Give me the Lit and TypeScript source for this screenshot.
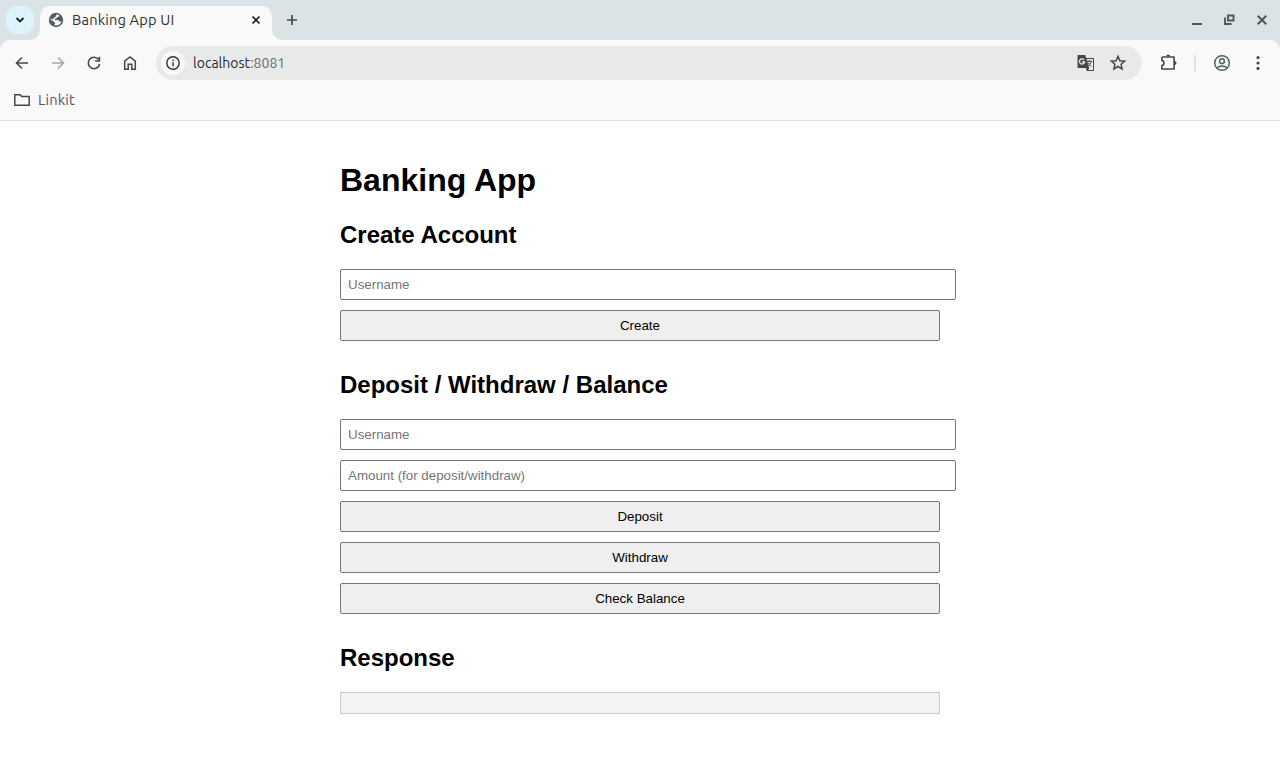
import { LitElement, html, css, svg } from "lit";
import { customElement } from "lit/decorators.js";

const icon = (size: number, body: unknown, box = "0 0 24 24") =>
  html`<svg width=${size} height=${size} viewBox=${box} fill="currentColor">${body}</svg>`;

const stroke = (d: string, w = 1.8) =>
  svg`<path d=${d} fill="none" stroke="currentColor" stroke-width=${w}/>`;

@customElement("browser-chrome")
class BrowserChrome extends LitElement {
  static styles = css`
    :host { display: block; height: 121px; box-sizing: border-box; background: #dae3e5;
      font-family: Ubuntu, "Noto Sans", sans-serif; color: #474747; }
    svg { display: block; flex: none; }
    .tabs { display: flex; height: 40px; box-sizing: border-box; padding: 6px 6px 0; }
    .search { width: 28px; height: 28px; border-radius: 10px; background: #def3f9; color: #1f1f1f;
      display: grid; place-items: center; margin-right: 6px; }
    .tab { position: relative; display: flex; align-items: center; width: 232px; height: 34px; box-sizing: border-box;
      padding: 0 8px 6px; background: #f9f9f9; border-radius: 10px 10px 0 0; }
    .tab::before, .tab::after { content: ""; position: absolute; bottom: 0; width: 10px; height: 10px; }
    .tab::before { left: -10px; background: radial-gradient(circle at 0 0, transparent 9.5px, #f9f9f9 10px); }
    .tab::after { right: -10px; background: radial-gradient(circle at 100% 0, transparent 9.5px, #f9f9f9 10px); }
    .title { flex: 1; margin-left: 8px; font-size: 14.67px; line-height: 20px; color: #303133; letter-spacing: 0.16px; white-space: nowrap; }
    .close { color: #1f1f1f; }
    .plus { margin: 6px 0 0 12px; }
    .window { margin-left: auto; display: flex; gap: 16px; padding: 6px 4px 0 0; color: #50575a; }
    .body { background: #f9f9f9; height: 81px; box-sizing: border-box; border-bottom: 1px solid #dfe1e1;
      border-radius: 10px 10px 0 0; }
    .toolbar { display: flex; align-items: center; height: 46px; padding: 0 13px; }
    .nav { display: flex; gap: 18px; margin-right: 17px; }
    .off { color: #a5a5a5; }
    .address { display: flex; align-items: center; width: 986px; height: 34px; box-sizing: border-box;
      padding: 0 15px 0 5px; border-radius: 17px; background: #e8eaea; }
    .info { width: 24px; height: 24px; border-radius: 50%; background: #f9f9f9; color: #303030; display: grid; place-items: center; }
    .url { flex: 1; margin-left: 8px; font-size: 14px; color: #292b2b; letter-spacing: 0.02px; }
    .port { color: #686b6b; }
    .address > svg + svg { margin-left: 14px; }
    .tools { display: flex; align-items: center; margin-left: 16px; }
    .rule { width: 2px; height: 16px; background: #d3e6e8; margin: 0 18px 0 16px; }
    .person { color: #4d6267; margin-left: -1px; }
    .dots { margin-left: 17px; }
    .bookmarks { display: flex; align-items: center; height: 28px; padding-left: 13px; }
    .bookmark { margin: 0 0 2px 7px; font-size: 14.67px; line-height: 17px; letter-spacing: 0.12px; color: #555759; }
  `;

  render() {
    return html`
      <div class="tabs">
        <div class="search">${icon(12, stroke("M2.5 4 6 7.5 9.5 4", 1.9), "0 0 12 12")}</div>
        <div class="tab">
          ${icon(16, svg`<circle cx="8" cy="8" r="7.2" fill="#555b60"/><path fill="#f9f9f9" d="M8.6 2.3 11.3 3.2C11.2 4.9 10 5 9 5.1L8.6 6.3 7 6.8V8h3.2l1 1.4 2.3-.2c-.6 2.2-2.2 3.9-4.9 4.4L5.8 13.2l1.3-.9V11L5.3 9.2 2.4 7.4C2.5 8 2.3 7 2.6 6.4L5 7.6 6.2 5.6 8.1 4.4Z"/>`, "0 0 16 16")}
          <span class="title">Banking App UI</span>
          <span class="close">${icon(16, stroke("M4.5 4.5 11.5 11.5M11.5 4.5 4.5 11.5", 1.7), "0 0 16 16")}</span>
        </div>
        <div class="plus">${icon(16, stroke("M8 3V13M3 8H13", 1.7), "0 0 16 16")}</div>
        <div class="window">
          ${icon(16, stroke("M2 12H12", 2), "0 0 16 16")}
          ${icon(16, svg`<path d="M6 3.5h5.5v5H6zM3 5.5V12h6.5" fill="none" stroke="currentColor" stroke-width="1.9"/>`, "0 0 16 16")}
          ${icon(16, stroke("M3.7 3.7 12.3 12.3M12.3 3.7 3.7 12.3", 2), "0 0 16 16")}
        </div>
      </div>
      <div class="body">
        <div class="toolbar">
          <div class="nav">
            ${icon(18, stroke("M15 9H3.8M9 3.5 3.5 9 9 14.5", 1.6), "0 0 18 18")}
            <span class="off">${icon(18, stroke("M3 9H14.2M9 3.5 14.5 9 9 14.5", 1.6), "0 0 18 18")}</span>
            ${icon(18, svg`${stroke("M13.6 5.6A5.7 5.7 0 1 0 14.6 10M14.4 2.8V7H10", 1.6)}`, "0 0 18 18")}
            ${icon(18, stroke("M3.7 7.2 9 3 14.3 7.2V15.2H10.8V10.2H7.2V15.2H3.7Z", 1.5), "0 0 18 18")}
          </div>
          <div class="address">
            <div class="info">${icon(16, svg`<circle cx="8" cy="8" r="6.2" fill="none" stroke="currentColor" stroke-width="1.4"/><path d="M7.3 7.2h1.4v4H7.3zM7.3 4.6h1.4V6H7.3z"/>`, "0 0 16 16")}</div>
            <span class="url">localhost<span class="port">:8081</span></span>
            ${icon(18, svg`<path d="M1.5 1h6.7l1 3H16c.6 0 1 .4 1 1v11c0 .6-.4 1-1 1H9.8l-1-3H1.5c-.6 0-1-.4-1-1V2c0-.6.4-1 1-1Z"/><path fill="#e8eaea" d="M9.6 5.1H16V16h-4.8l1-2-2.6-8.9Z"/><path fill="none" stroke="#e8eaea" stroke-width="1.3" d="M7 5.7A2.6 2.6 0 1 0 7.6 8H5.1"/><path fill="none" stroke="currentColor" stroke-width="1" d="M9.7 7.3h5.6M12.3 6v1.3M14.3 7.3c-.4 2-1.8 3.6-3.3 4.7M11 8.5c.8 1.5 2 2.7 3.3 3.8"/>`, "0 0 18 18")}
            ${icon(18, stroke("M9 2.4 10.9 6.8 15.7 7.2 12.1 10.3 13.1 15 9 12.5 4.9 15 5.9 10.3 2.3 7.2 7.1 6.8Z", 1.5), "0 0 18 18")}
          </div>
          <div class="tools">
            ${icon(20, svg`<path d="M4.7 4H16.1V16H3.8V12.6C6.6 12.4 6.6 7.6 3.8 7.4V4.9Q3.8 4 4.7 4Z" fill="none" stroke="currentColor" stroke-width="1.6" stroke-linejoin="round"/><path d="M8.2 3.6a2 2 0 0 1 4 0ZM16.5 8a2 2 0 0 1 0 4Z"/>`, "0 0 20 20")}
            <div class="rule"></div>
            <span class="person">${icon(18, svg`<g fill="none" stroke="currentColor" stroke-width="1.5"><circle cx="9" cy="9" r="7.3"/><circle cx="9" cy="7.2" r="2.4"/><path d="M3.8 14C6.8 11.4 11.2 11.4 14.2 14"/></g>`, "0 0 18 18")}</span>
            <span class="dots">${icon(18, svg`<circle cx="10" cy="3.6" r="1.6"/><circle cx="10" cy="9" r="1.6"/><circle cx="10" cy="14.4" r="1.6"/>`, "0 0 18 18")}</span>
          </div>
        </div>
        <div class="bookmarks">
          ${icon(18, stroke("M1.8 3.8H7L8.8 5.6H16.2V14.2H1.8Z", 1.5), "0 0 18 18")}
          <span class="bookmark">Linkit</span>
        </div>
      </div>`;
  }
}

@customElement("banking-page")
class BankingPage extends LitElement {
  static styles = css`
    :host { display: block; width: 600px; margin: 0 auto; padding-top: 41px;
      font-family: "Liberation Sans", Arial, sans-serif; color: #000; }
    h1 { font-size: 32px; line-height: 37px; margin: 0 0 22px; }
    h2 { font-size: 24px; line-height: 28px; margin: 0 0 20px; }
    form { display: flex; flex-direction: column; align-items: flex-start; gap: 10px; margin: 0 0 30px; }
    input, button { box-sizing: border-box; height: 31px; margin: 0; padding: 0 7px;
      font: 13.333px/15px "Liberation Sans", Arial, sans-serif; border: 1px solid #767676; border-radius: 2px; }
    input { width: 616px; background: #fff; }
    input::placeholder { color: #757575; }
    button { width: 600px; background: #efefef; color: #000; }
    .output { box-sizing: border-box; height: 22px; border: 1px solid #ccc; background: #f3f3f3; }
  `;

  render() {
    return html`
      <h1>Banking App</h1>
      <h2>Create Account</h2>
      <form>
        <input placeholder="Username" />
        <button type="button">Create</button>
      </form>
      <h2>Deposit / Withdraw / Balance</h2>
      <form>
        <input placeholder="Username" />
        <input placeholder="Amount (for deposit/withdraw)" />
        <button type="button">Deposit</button>
        <button type="button">Withdraw</button>
        <button type="button">Check Balance</button>
      </form>
      <h2>Response</h2>
      <div class="output"></div>`;
  }
}

@customElement("app-root")
class AppRoot extends LitElement {
  static styles = css`
    :host { display: block; height: 768px; overflow: hidden; background: #fff; }
  `;

  render() {
    return html`<browser-chrome></browser-chrome><banking-page></banking-page>`;
  }
}
